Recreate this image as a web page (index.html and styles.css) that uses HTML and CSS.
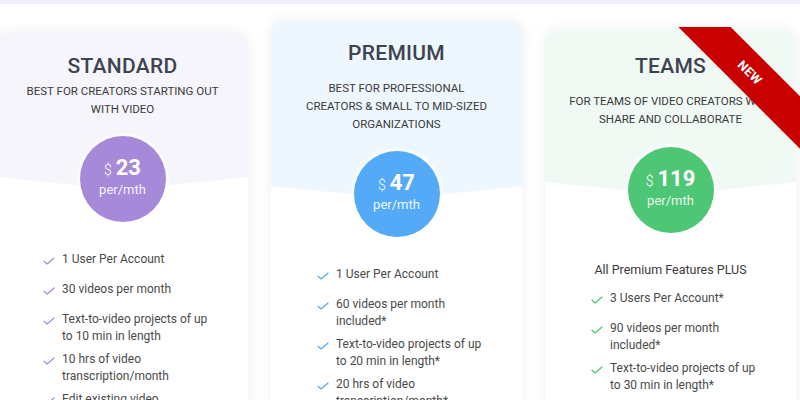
FILE: index.html
```html
<!DOCTYPE html>
<html>
<head>
<meta charset="utf-8">
<link rel="stylesheet" href="styles.css">
</head>
<body>
<div class="topbar"></div>
<div class="plans">
  <div class="card card--standard">
    <div class="card-head">
      <h2 class="card-title">STANDARD</h2>
      <p class="card-sub">BEST FOR CREATORS STARTING OUT<br>WITH VIDEO</p>
    </div>
    <div class="price"><div class="amount"><span class="cur">$</span><span class="num">23</span></div><div class="per">per/mth</div></div>
    <ul class="features">
      <li><svg class="check" viewBox="0 0 12 8"><path d="M1 4.2 L4.2 7 L11 1"/></svg><span>1 User Per Account</span></li>
      <li><svg class="check" viewBox="0 0 12 8"><path d="M1 4.2 L4.2 7 L11 1"/></svg><span>30 videos per month</span></li>
      <li><svg class="check" viewBox="0 0 12 8"><path d="M1 4.2 L4.2 7 L11 1"/></svg><span>Text-to-video projects of up<br>to 10 min in length</span></li>
      <li><svg class="check" viewBox="0 0 12 8"><path d="M1 4.2 L4.2 7 L11 1"/></svg><span>10 hrs of video<br>transcription/month</span></li>
      <li><svg class="check" viewBox="0 0 12 8"><path d="M1 4.2 L4.2 7 L11 1"/></svg><span>Edit existing video<br>content</span></li>
    </ul>
  </div>

  <div class="card card--premium">
    <div class="card-head">
      <h2 class="card-title">PREMIUM</h2>
      <p class="card-sub">BEST FOR PROFESSIONAL<br>CREATORS &amp; SMALL TO MID-SIZED<br>ORGANIZATIONS</p>
    </div>
    <div class="price"><div class="amount"><span class="cur">$</span><span class="num">47</span></div><div class="per">per/mth</div></div>
    <ul class="features">
      <li><svg class="check" viewBox="0 0 12 8"><path d="M1 4.2 L4.2 7 L11 1"/></svg><span>1 User Per Account</span></li>
      <li><svg class="check" viewBox="0 0 12 8"><path d="M1 4.2 L4.2 7 L11 1"/></svg><span>60 videos per month<br>included*</span></li>
      <li><svg class="check" viewBox="0 0 12 8"><path d="M1 4.2 L4.2 7 L11 1"/></svg><span>Text-to-video projects of up<br>to 20 min in length*</span></li>
      <li><svg class="check" viewBox="0 0 12 8"><path d="M1 4.2 L4.2 7 L11 1"/></svg><span>20 hrs of video<br>transcription/month*</span></li>
    </ul>
  </div>

  <div class="card card--teams">
    <div class="ribbon"><span>NEW</span></div>
    <div class="card-head">
      <h2 class="card-title">TEAMS</h2>
      <p class="card-sub">FOR TEAMS OF VIDEO CREATORS WHO<br>SHARE AND COLLABORATE</p>
    </div>
    <div class="price"><div class="amount"><span class="cur">$</span><span class="num">119</span></div><div class="per">per/mth</div></div>
    <p class="features-intro">All Premium Features PLUS</p>
    <ul class="features">
      <li><svg class="check" viewBox="0 0 12 8"><path d="M1 4.2 L4.2 7 L11 1"/></svg><span>3 Users Per Account*</span></li>
      <li><svg class="check" viewBox="0 0 12 8"><path d="M1 4.2 L4.2 7 L11 1"/></svg><span>90 videos per month<br>included*</span></li>
      <li><svg class="check" viewBox="0 0 12 8"><path d="M1 4.2 L4.2 7 L11 1"/></svg><span>Text-to-video projects of up<br>to 30 min in length*</span></li>
      <li><svg class="check" viewBox="0 0 12 8"><path d="M1 4.2 L4.2 7 L11 1"/></svg><span>30 hrs of video<br>transcription/month*</span></li>
    </ul>
  </div>
</div>
</body>
</html>
```

FILE: styles.css
```css
* { box-sizing: border-box; }
html, body { margin: 0; padding: 0; }
body {
  width: 800px;
  height: 400px;
  overflow: hidden;
  background: #ffffff;
  font-family: Roboto, "Liberation Sans", sans-serif;
  color: #444;
}
.topbar {
  height: 4px;
  background: #efeffb;
}
.plans {
  display: flex;
  align-items: flex-start;
  gap: 23px;
  margin-left: -3px;
}
.card {
  position: relative;
  flex: 0 0 251px;
  height: 420px;
  background: #fff;
  border-radius: 12px;
  box-shadow: 0 0 14px rgba(40, 40, 80, 0.07);
}
.card--standard { margin-top: 28px; }
.card--premium { margin-top: 16px; }
.card--teams { margin-top: 26px; }

.card-head {
  text-align: center;
  border-radius: 12px 12px 0 0;
  clip-path: polygon(0 0, 100% 0, 100% calc(100% - 13px), 50% 100%, 0 calc(100% - 13px));
}
.card--standard .card-head { background: #f6f5fb; padding: 20px 0 72px; }
.card--premium .card-head { background: #eef6fe; padding: 19px 0 66px; }
.card--teams .card-head { background: #f1f9f4; padding: 22px 0 67px; }

.card-title {
  margin: 0;
  font-size: 21px;
  line-height: 28px;
  font-weight: 500;
  color: #3d4350;
  letter-spacing: 0.3px;
}
.card-sub {
  margin: 12px 0 0;
  font-size: 11.5px;
  line-height: 18px;
  color: #3a3a3a;
  white-space: nowrap;
}
.card--standard .card-sub { margin-top: 2px; }

.price {
  position: relative;
  width: 86px;
  height: 86px;
  margin: -48px auto 0;
  border-radius: 50%;
  display: flex;
  flex-direction: column;
  align-items: center;
  justify-content: center;
  color: #fff;
  box-shadow: 0 0 0 3px rgba(255, 255, 255, 0.6);
}
.card--standard .price { background: #a68ad9; margin-top: -54px; }
.card--premium .price { background: #55aaf7; }
.card--teams .price { background: #4dc676; }
.amount {
  display: flex;
  align-items: baseline;
  gap: 4px;
  line-height: 24px;
  margin-top: -4px;
}
.cur { font-size: 14px; font-weight: 300; }
.num { font-size: 22px; font-weight: 700; }
.per { font-size: 13px; line-height: 16px; opacity: 0.9; }

.features-intro {
  margin: 28px 0 0;
  text-align: center;
  font-size: 12.5px;
  line-height: 17px;
  color: #3a3a3a;
}
.features {
  list-style: none;
  margin: 29px 0 0;
  padding: 0 0 0 46px;
}
.features-intro + .features { margin-top: 12px; }
.features li {
  display: flex;
  align-items: flex-start;
  gap: 7px;
  min-height: 24px;
  margin-bottom: 6px;
  font-size: 12px;
  line-height: 17px;
  color: #4a4a4a;
  white-space: nowrap;
}
.check {
  flex: 0 0 12px;
  width: 12px;
  height: 8px;
  margin-top: 6px;
  fill: none;
  stroke-width: 1.2;
  stroke-linecap: round;
  stroke-linejoin: round;
}
.card--standard .check { stroke: #a68ad9; }
.card--premium .check { stroke: #55aaf7; }
.card--teams .check { stroke: #4dc676; }

.ribbon {
  position: absolute;
  top: -3px;
  right: -4px;
  width: 125px;
  height: 125px;
  overflow: hidden;
  z-index: 2;
}
.ribbon span {
  position: absolute;
  left: -15px;
  top: 27px;
  width: 180px;
  height: 37px;
  line-height: 37px;
  background: #c80000;
  color: #fff;
  text-align: center;
  font-size: 12.5px;
  font-weight: 700;
  letter-spacing: 0.5px;
  transform: rotate(45deg);
}
```
